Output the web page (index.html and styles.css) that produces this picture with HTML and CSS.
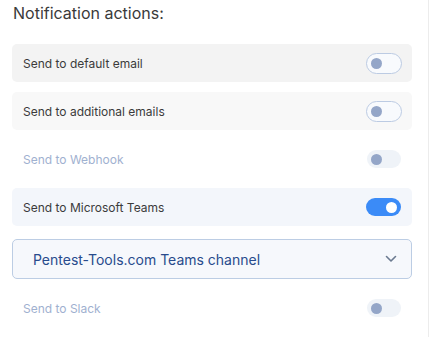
FILE: index.html
```html
<!DOCTYPE html>
<html>
  <head>
    <meta charset="utf-8" />
    <meta name="viewport" content="width=device-width, initial-scale=1" />
    <link rel="stylesheet" href="styles.css">
  </head>
  <body>
    <div class="panel">
      <div class="panel-title">Notification actions:</div>

      <div class="action action-grey">
        <span class="action-label">Send to default email</span>
        <span class="toggle"><span class="knob"></span></span>
      </div>

      <div class="action action-light">
        <span class="action-label">Send to additional emails</span>
        <span class="toggle"><span class="knob"></span></span>
      </div>

      <div class="action disabled">
        <span class="action-label">Send to Webhook</span>
        <span class="toggle"><span class="knob"></span></span>
      </div>

      <div class="action action-blue">
        <span class="action-label">Send to Microsoft Teams</span>
        <span class="toggle on"><span class="knob"></span></span>
      </div>

      <div class="select">
        <span class="select-text">Pentest-Tools.com Teams channel</span>
        <svg class="chevron" width="12" height="8" viewBox="0 0 12 8">
          <path d="M1.5 1.5 L6 6 L10.5 1.5" fill="none" stroke="#6b7a90" stroke-width="1.6" stroke-linecap="round" stroke-linejoin="round" />
        </svg>
      </div>

      <div class="action disabled">
        <span class="action-label">Send to Slack</span>
        <span class="toggle"><span class="knob"></span></span>
      </div>
    </div>
  </body>
</html>
```

FILE: styles.css
```css
html,
body,
div {
  margin: 0;
  padding: 0;
  box-sizing: border-box;
}

body {
  font-family: Inter, "Liberation Sans", sans-serif;
  background: #fff;
}

.panel {
  width: 429px;
  height: 337px;
  padding: 0 16px 0 12px;
  border-right: 1px solid #ececec;
  display: flex;
  flex-direction: column;
}

.panel-title {
  font-size: 16px;
  color: #3a3a3a;
  padding: 3px 0 0 1px;
  height: 44px;
}

.action {
  display: flex;
  align-items: center;
  justify-content: space-between;
  height: 38px;
  padding: 0 10px 0 11px;
  border-radius: 5px;
  margin-bottom: 10px;
}
.action-grey {
  background-color: #f3f3f3;
}
.action-light {
  background-color: #f8f8f8;
}
.action-blue {
  background-color: #f3f6fb;
  margin-bottom: 13px;
}

.action-label {
  font-size: 12px;
  color: #3b3b3b;
}
.action.disabled .action-label {
  color: #9fb1d0;
}

.toggle {
  width: 36px;
  height: 21px;
  border: 1px solid #bccbe3;
  border-radius: 11px;
  background-color: #f8fafd;
  display: flex;
  align-items: center;
  padding-left: 4px;
  box-sizing: border-box;
}
.knob {
  width: 11px;
  height: 11px;
  border-radius: 50%;
  background-color: #94a6c8;
}
.action.disabled .toggle {
  border: 0;
  width: 34px;
  height: 18px;
  background-color: #eff3f8;
  margin-right: 1px;
}
.toggle.on {
  border: 0;
  width: 35px;
  height: 18px;
  background-color: #3b8bf7;
  justify-content: flex-end;
  padding: 0 4px 0 0;
  margin-right: 1px;
}
.toggle.on .knob {
  background-color: #fff;
}

.select {
  display: flex;
  align-items: center;
  justify-content: space-between;
  height: 40px;
  border: 1px solid #bccde4;
  border-radius: 5px;
  background-color: #f6f8fc;
  padding: 0 14px 0 20px;
  margin-bottom: 10px;
}
.select-text {
  font-size: 14px;
  color: #284b8c;
}
```
